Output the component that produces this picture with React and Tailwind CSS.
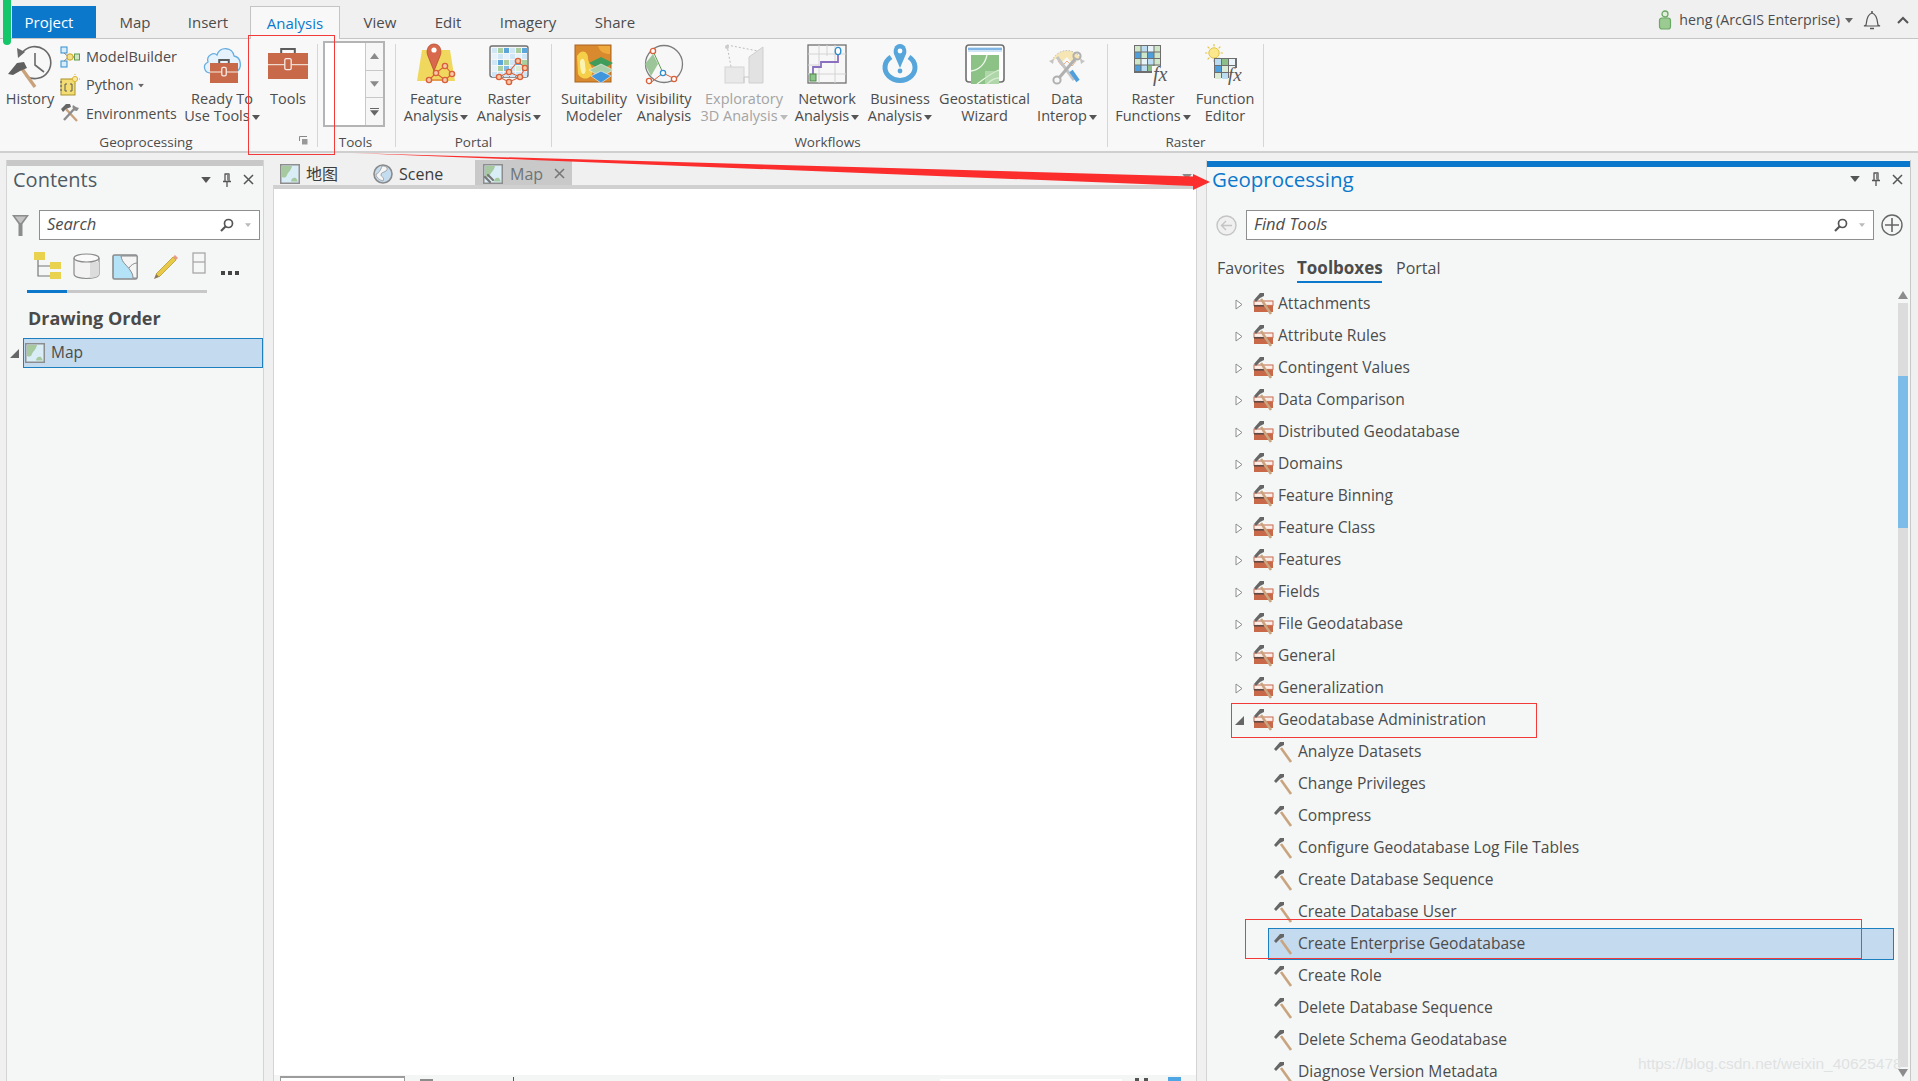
import React from "react";

function Caret({ c = "#555", className = "" }) {
  return (
    <svg width="8" height="5" viewBox="0 0 8 5" className={"inline-block align-middle " + className}>
      <polygon points="0,0 8,0 4,5" fill={c} />
    </svg>
  );
}

function Ico({ children, w = 40, h = 40 }) {
  return (
    <svg width={w} height={h} viewBox={`0 0 ${w} ${h}`} overflow="visible">
      {children}
    </svg>
  );
}

function Node({ x, y, r = 2.6, c = "#d9603a" }) {
  return <circle cx={x} cy={y} r={r} fill="#f6c9a8" stroke={c} strokeWidth="1.4" />;
}

function RasterCells({ x, y, s, cols, rows, palette }) {
  const out = [];
  for (let r = 0; r < rows; r++) {
    for (let q = 0; q < cols; q++) {
      out.push(
        <rect key={r + "-" + q} x={x + q * s} y={y + r * s} width={s - 1} height={s - 1} fill={palette[(r * 3 + q * 2 + r * q) % palette.length]} />
      );
    }
  }
  return out;
}

const HistoryIcon = () => (
  <svg width="46" height="44" viewBox="0 0 46 44">
    <path d="M15 9 A16 16 0 1 1 19 32" fill="none" stroke="#6a6a6a" strokeWidth="1.6" />
    <polygon points="10,4 18,8 11,14" fill="#6a6a6a" />
    <path d="M28 9 V21 L37 28" fill="none" stroke="#6a6a6a" strokeWidth="1.6" />
    <line x1="13" y1="22" x2="28" y2="43" stroke="#c9a27c" strokeWidth="3.4" />
    <polygon points="1,30 10,19 17,18 20,24 13,27 6,31" fill="#5f5f5f" />
  </svg>
);

const ModelBuilderIcon = () => (
  <Ico w={20} h={22}>
    <rect x="1" y="1" width="6" height="6" fill="#d8ecfa" stroke="#2f8fd0" />
    <rect x="1" y="15" width="6" height="6" fill="#d8ecfa" stroke="#2f8fd0" />
    <circle cx="10" cy="11" r="3.2" fill="#f4e08a" stroke="#c9a52a" />
    <rect x="14.5" y="8" width="5" height="6" fill="#cfe6c0" stroke="#5f9c50" />
    <path d="M4 7 L7.5 10 M4 15 L7.5 12 M13 11 H15" stroke="#888" />
  </Ico>
);

const PythonIcon = () => (
  <Ico w={20} h={22}>
    <rect x="1" y="5" width="14" height="16" fill="#f3dd72" stroke="#a8922e" />
    <path d="M1 7 v2 M1 11 v2 M1 15 v2" stroke="#555" />
    <path d="M7 10 H5 V17 H7 M10 10 H12 V17 H10" stroke="#5a5a5a" fill="none" />
    <circle cx="15" cy="5" r="2.6" fill="#fbe9a0" stroke="#d9b437" />
    <path d="M15 0 v1 M15 9 v1 M10 5 h1 M19 5 h1" stroke="#d9b437" />
  </Ico>
);

const EnvIcon = () => (
  <Ico w={20} h={20}>
    <line x1="6" y1="6" x2="17" y2="18" stroke="#c9a27c" strokeWidth="2.4" />
    <polygon points="1,6 6,1 10,1 11,4 6,6 3,9" fill="#666" />
    <line x1="15" y1="5" x2="4" y2="17" stroke="#8c8c8c" strokeWidth="2.4" />
    <path d="M13 2 a4 4 0 0 0 4 6 l2 -3 l-3 -1 z" fill="#8c8c8c" />
  </Ico>
);

const ToolboxBody = ({ x, y, w, h }) => (
  <g>
    <path d={`M${x + w * 0.33} ${y} v${-h * 0.15} h${w * 0.34} v${h * 0.15}`} fill="none" stroke="#5c5c5c" strokeWidth="2" />
    <rect x={x} y={y} width={w} height={h} fill="#c8694a" />
    <line x1={x} y1={y + h * 0.45} x2={x + w} y2={y + h * 0.45} stroke="#f0d8cc" strokeWidth="1.2" />
    <rect x={x + w * 0.42} y={y + h * 0.22} width={w * 0.16} height={h * 0.42} rx="1.4" fill="#c8694a" stroke="#f5ebe6" strokeWidth="1.3" />
  </g>
);

const CloudIcon = () => (
  <Ico>
    <path d="M9 29 C2 29 0 21 6 18 C4 11 12 8 15 11 C18 2 31 3 32 12 C39 13 41 24 34 28" fill="#e6f3fc" stroke="#67aee0" strokeWidth="1.3" />
    <ToolboxBody x={8} y={19} w={28} h={20} />
  </Ico>
);

const FeatureIcon = () => (
  <Ico>
    <polygon points="6,6 34,6 39,37 1,37" fill="#f0d85e" />
    <path d="M18 0 C11 0 10 8 12 12 L18 27 L24 12 C26 8 25 0 18 0 Z" fill="#d8694c" stroke="#b54e34" strokeWidth=".8" />
    <circle cx="18" cy="6" r="2.6" fill="#fff" />
    <path d="M13 36 L20 29 L29 36 L36 30 L29 22 L20 29 M13 36 L29 36" stroke="#d9603a" fill="none" strokeWidth="1.1" />
    <Node x={13} y={36} /><Node x={20} y={29} /><Node x={29} y={36} /><Node x={36} y={30} /><Node x={29} y={22} />
  </Ico>
);

const RasterIcon = () => (
  <Ico>
    <rect x="1" y="2" width="38" height="31" rx="2" fill="#f5f5f5" stroke="#6e6e6e" strokeWidth="1.4" />
    <RasterCells x={3} y={4} s={6} cols={6} rows={5} palette={["#cfe6f7", "#7fbce8", "#a9cfa0", "#e6f1fa", "#5da6dc", "#dcebd6"]} />
    <path d="M10 33 L20 28 L31 33 L36 24 L29 17 L20 28 M10 33 L20 38 L31 33" stroke="#d9603a" fill="none" strokeWidth="1.1" />
    <Node x={10} y={33} /><Node x={20} y={28} /><Node x={31} y={33} /><Node x={36} y={24} /><Node x={29} y={17} /><Node x={20} y={38} />
  </Ico>
);

const SuitIcon = () => (
  <Ico>
    <rect x="1" y="1" width="36" height="37" fill="#d98a2e" stroke="#a8631e" />
    <path d="M3 12 C8 4 14 8 14 14 C14 20 20 22 18 30 C14 38 6 34 4 30 Z" fill="#f6cf4a" />
    <path d="M6 17 C9 12 11 16 11 20 C11 25 13 27 10 30 C7 31 6 24 6 17 Z" fill="#fdf3b0" />
    <path d="M24 2 H36 V10 C30 10 26 8 24 2 Z" fill="#eeaa3c" />
    <polygon points="27,13 39,19 27,26 15,19" fill="#3f9c5a" />
    <polygon points="27,20 39,26 27,33 15,26" fill="#a9cfa8" stroke="#f7f7f7" strokeWidth=".6" />
    <polygon points="27,27 37,32 27,39 17,32" fill="#3f96dc" stroke="#f7f7f7" strokeWidth=".6" />
  </Ico>
);

const VisIcon = () => (
  <Ico>
    <circle cx="20" cy="20" r="18.5" fill="#f7f7f7" stroke="#7d7d7d" strokeWidth="1.3" />
    <polygon points="1,20 9,10 14,20 7,32" fill="#9cc59a" />
    <line x1="9" y1="7" x2="19" y2="29" stroke="#5f9c50" />
    <line x1="19" y1="29" x2="31" y2="35" stroke="#d9603a" />
    <line x1="19" y1="29" x2="5" y2="40" stroke="#d9603a" />
    <circle cx="9" cy="7" r="2.6" fill="#fff" stroke="#d9603a" strokeWidth="1.3" />
    <circle cx="19" cy="29" r="2.6" fill="#fff" stroke="#2f8fd0" strokeWidth="1.3" />
    <circle cx="30" cy="35" r="2.6" fill="#fff" stroke="#d9603a" strokeWidth="1.3" />
    <circle cx="5" cy="37" r="2.6" fill="#fff" stroke="#d9603a" strokeWidth="1.3" />
  </Ico>
);

const ExploreIcon = () => (
  <Ico>
    <polygon points="25,13 39,3 39,39 25,39" fill="#e2e2e2" stroke="#cfcfcf" />
    <rect x="1" y="23" width="19" height="16" fill="#e9e9e9" stroke="#d4d4d4" />
    <path d="M20 39 V33 H25" stroke="#c8c8c8" fill="none" />
    <path d="M3 1 L7 23 M3 1 L34 7" stroke="#bdbdbd" strokeDasharray="2 2" fill="none" />
    <circle cx="3" cy="3" r="2" fill="#ccc" />
  </Ico>
);

const NetworkIcon = () => (
  <Ico>
    <rect x="1" y="1" width="38" height="38" fill="#f7f7f7" stroke="#707070" strokeWidth="1.3" />
    <path d="M1 10 H39 M1 30 H39 M12 1 V39 M28 1 V39 M20 1 V12 M1 21 H12" stroke="#d4d4d4" strokeWidth="1" />
    <path d="M6 33 V23 H14 V18 H31 V8" fill="none" stroke="#8a6fc0" strokeWidth="1.8" />
    <rect x="3" y="30" width="6" height="7" fill="#8ec58c" stroke="#4f8a48" />
    <ellipse cx="31" cy="7" rx="2.8" ry="3.6" fill="#fff" stroke="#2f8fd0" strokeWidth="1.4" />
  </Ico>
);

const BusinessIcon = () => (
  <Ico>
    <path d="M11 13 A15 13 0 1 0 29 13" fill="none" stroke="#56a6dc" strokeWidth="5" />
    <path d="M20 0 C14 0 13 7 14 10 L20 24 L26 10 C27 7 26 0 20 0 Z" fill="#56a6dc" />
    <circle cx="20" cy="7" r="2.4" fill="#fff" />
    <circle cx="20" cy="27" r="2.4" fill="#56a6dc" />
  </Ico>
);

const GeoIcon = () => (
  <Ico>
    <rect x="1" y="1" width="38" height="37" rx="3" fill="#fff" stroke="#707070" strokeWidth="1.6" />
    <rect x="3" y="3" width="34" height="5" fill="#cfe4f5" />
    <rect x="3" y="4" width="34" height="2" fill="#7fb6e6" />
    <rect x="6" y="11" width="28" height="29" fill="#8dc287" />
    <path d="M6 27 C14 26 20 20 22 11 M12 40 C20 34 28 28 34 26 M22 40 C26 36 30 34 34 34" stroke="#eef7ea" strokeWidth="1.3" fill="none" />
    <rect x="20" y="27" width="14" height="13" fill="#c5e2bf" opacity=".6" />
  </Ico>
);

const InteropIcon = () => (
  <Ico>
    <path d="M5 17 A16 16 0 0 1 35 17 L28 14 L24 18 L20 13 L15 18 L11 14 Z" fill="#f6e6b4" />
    <path d="M5 17 A16 16 0 0 1 35 17" fill="none" stroke="#bcbcbc" strokeDasharray="1.5 1.5" />
    <path d="M11 17 L15 22 L20 17 L25 22 L29 17" stroke="#eab08a" fill="none" />
    <line x1="10" y1="13" x2="27" y2="36" stroke="#c4c4c4" strokeWidth="3" />
    <line x1="24" y1="27" x2="31" y2="37" stroke="#4f9fdc" strokeWidth="4" />
    <line x1="29" y1="14" x2="12" y2="34" stroke="#b0b0b0" strokeWidth="3" />
    <circle cx="10" cy="36" r="3.6" fill="none" stroke="#b0b0b0" strokeWidth="2" />
    <circle cx="30" cy="12" r="3.6" fill="none" stroke="#b0b0b0" strokeWidth="2" />
    <path d="M2 17 l5 -2 l-1 5 z M38 17 l-5 -2 l1 5 z" fill="#c4c4c4" />
  </Ico>
);

const FxText = ({ x, y, s }) => (
  <text x={x} y={y} fontSize={s} fontStyle="italic" fontFamily="'Liberation Serif', serif" fill="#5a5a5a">fx</text>
);

const RasterFnIcon = () => (
  <Ico>
    <rect x="1" y="1" width="27" height="28" fill="#6e6e6e" />
    <RasterCells x={2} y={2} s={6.5} cols={4} rows={4} palette={["#cfe6c8", "#8cbf88", "#bcdcf2", "#4f9fdc", "#e8f3fa", "#6aa869"]} />
    <rect x="19" y="22" width="20" height="18" fill="#f8f8f8" />
    <FxText x={20} y={37} s={20} />
  </Ico>
);

const FnEditorIcon = () => (
  <Ico>
    <circle cx="9" cy="9" r="5.2" fill="#fbe88c" stroke="#e2c648" />
    <path d="M9 0 v2.4 M9 15.6 v2.4 M0 9 h2.4 M15.6 9 h2.4 M2.6 2.6 l1.8 1.8 M13.6 13.6 l1.8 1.8 M2.6 15.4 l1.8 -1.8 M13.6 4.4 l1.8 -1.8" stroke="#e2c648" strokeWidth="1.2" />
    <rect x="9" y="14" width="23" height="20" fill="#6e6e6e" />
    <RasterCells x={10} y={15} s={7} cols={3} rows={3} palette={["#bcdcf2", "#dcebd6", "#8cbf88", "#4f9fdc", "#e8f3fa"]} />
    <rect x="24" y="24" width="16" height="16" fill="#f8f8f8" />
    <FxText x={23} y={37} s={19} />
  </Ico>
);

const MapThumb = ({ link }) => (
  <svg width="20" height="20" viewBox="0 0 20 20">
    <rect x=".75" y=".75" width="18.5" height="18.5" fill="#d9edf7" stroke="#8d8d8d" strokeWidth="1.5" />
    <path d="M2 2 H12 C11 7 8 8 7 11 C6 14 4 14 2 13 Z" fill="#a6c9a0" />
    <path d="M11 17.5 C11 14 14 13 16 14 L18 17.5 Z" fill="#a6c9a0" />
    {link && <path d="M2 13 l5 5 m-2 -7 l5 5" stroke="#777" strokeWidth="2.2" strokeLinecap="round" />}
  </svg>
);

const GlobeIcon = () => (
  <svg width="20" height="20" viewBox="0 0 20 20">
    <circle cx="10" cy="10" r="9" fill="#c4dcf0" stroke="#8a8a8a" strokeWidth="1.6" />
    <path d="M9 2 C13 2 16 4 13 7 C10 9 8 8 8 11 C8 13 12 13 10 17 C7 16 3 14 3 10 C5 10 8 6 9 2 Z" fill="#f5f5f5" stroke="#8a8a8a" strokeWidth=".7" />
  </svg>
);

const Magnifier = () => (
  <svg width="14" height="14" viewBox="0 0 14 14">
    <circle cx="8.5" cy="5.5" r="4" fill="#fff" stroke="#555" strokeWidth="1.7" />
    <line x1="5.5" y1="8.5" x2="1" y2="13" stroke="#555" strokeWidth="2.2" />
  </svg>
);

const Pane = () => (
  <div className="flex items-center gap-[11px]">
    <Caret c="#555" className="w-[10px] h-[6px]" />
    <svg width="10" height="14" viewBox="0 0 10 14">
      <path d="M2.5 1 H7.5 M3 1 V8 M7 1 V8 M1 8.5 H9 M5 9 V14" stroke="#555" strokeWidth="1.3" fill="none" />
      <rect x="5" y="1.5" width="2" height="6" fill="#888" />
    </svg>
    <svg width="11" height="11" viewBox="0 0 11 11">
      <path d="M1 1 L10 10 M10 1 L1 10" stroke="#555" strokeWidth="1.5" />
    </svg>
  </div>
);

const Hammer = () => (
  <svg width="20" height="22" viewBox="0 0 20 22">
    <line x1="8" y1="7" x2="18" y2="21" stroke="#c9a47f" strokeWidth="2.6" />
    <polygon points="1,8 7,1 11,1 11,4 7,6 3,10" fill="#666" />
  </svg>
);

const ToolboxTree = () => (
  <svg width="21" height="24" viewBox="0 0 21 24">
    <rect x="1" y="9" width="19" height="4.4" fill="#fbeee9" stroke="#c8694a" />
    <rect x="1" y="14" width="19" height="6" fill="#c8694a" />
    <rect x="1" y="13" width="10" height="1.6" fill="#5c4a44" />
    <line x1="8" y1="7" x2="18" y2="22" stroke="#c9a47f" strokeWidth="2.6" />
    <polygon points="1,8 7,1 11,1 11,4 7,6 3,10" fill="#666" />
  </svg>
);

function BigBtn({ w, icon, l1, l2, caret, disabled }) {
  return (
    <div style={{ width: w }} className={"flex flex-col items-center shrink-0 " + (disabled ? "text-[#a4a4a4]" : "text-[#4c4c4c]")}>
      <div className="h-[44px] flex items-start justify-center">{icon}</div>
      <div className="mt-[2px] h-[17px] leading-[17px] whitespace-nowrap">{l1}</div>
      <div className="h-[17px] leading-[17px] whitespace-nowrap">
        {l2}
        {caret && <Caret c={disabled ? "#bbb" : "#555"} className="ml-[2px]" />}
      </div>
    </div>
  );
}

function Group({ width, label, labelClass = "justify-center", children, noBorder }) {
  return (
    <div style={{ width }} className={"relative shrink-0 h-[103px] mt-[5px] flex flex-col " + (noBorder ? "" : "border-r border-[#d6d6d6]")}>
      <div className="flex h-[88px] shrink-0 items-start">{children}</div>
      <div className={"flex h-[17px] shrink-0 mt-[2px] leading-[17px] text-[13.5px] text-[#4c4c4c] " + labelClass}>{label}</div>
    </div>
  );
}

const groups = [
  "Attachments", "Attribute Rules", "Contingent Values", "Data Comparison", "Distributed Geodatabase",
  "Domains", "Feature Binning", "Feature Class", "Features", "Fields", "File Geodatabase", "General", "Generalization",
];
const tools = [
  "Analyze Datasets", "Change Privileges", "Compress", "Configure Geodatabase Log File Tables",
  "Create Database Sequence", "Create Database User", "Create Enterprise Geodatabase", "Create Role",
  "Delete Database Sequence", "Delete Schema Geodatabase", "Diagnose Version Metadata",
];

function GroupRow({ name, open }) {
  return (
    <div className="h-[32px] flex items-center shrink-0">
      <div className="w-[24px] ml-[28px] flex items-center">
        {open ? (
          <svg width="9" height="9" viewBox="0 0 9 9"><polygon points="9,0 9,9 0,9" fill="#666" /></svg>
        ) : (
          <svg width="8" height="11" viewBox="0 0 8 11"><polygon points="1,1 7,5.5 1,10" fill="#fff" stroke="#8c8c8c" /></svg>
        )}
      </div>
      <div className="w-[25px] ml-[-6px] flex"><ToolboxTree /></div>
      <span>{name}</span>
    </div>
  );
}

function ToolRow({ name, selected }) {
  return (
    <div className={"h-[32px] ml-[61px] flex items-center shrink-0 " + (selected ? "pl-[4px] bg-[#c4daee] border border-[#1c7fc0]" : "pl-[5px]")}>
      <div className="w-[25px] flex"><Hammer /></div>
      <span>{name}</span>
    </div>
  );
}

export default function App() {
  const tab = "mt-[6px] h-[32px] pt-[1px] flex items-center justify-center shrink-0";
  return (
    <div
      className="relative w-[1918px] h-[1081px] overflow-hidden flex flex-col bg-[#f0f0f0] text-[15px] text-[#4c4c4c]"
      style={{ fontFamily: "'Open Sans','Noto Sans CJK SC',sans-serif" }}
    >
      {/* Tabs */}
      <div className="h-[39px] shrink-0 border-b border-[#c4c4c4] flex items-start pl-[12px] relative">
        <div className={tab + " w-[84px] pr-[10px] bg-[#0b78cc] text-white"}>Project</div>
        <div className={tab + " w-[78px]"}>Map</div>
        <div className={tab + " w-[68px] mr-[8px]"}>Insert</div>
        <div className={tab + " h-[33px] w-[90px] bg-[#f8f8f8] border border-b-0 border-[#c4c4c4] text-[#0b78cc]"}>Analysis</div>
        <div className={tab + " w-[80px]"}>View</div>
        <div className={tab + " w-[56px]"}>Edit</div>
        <div className={tab + " w-[104px]"}>Imagery</div>
        <div className={tab + " w-[70px]"}>Share</div>
        <div className="ml-auto flex items-center h-[38px] pt-[2px] pr-[9px]">
          <svg width="14" height="20" viewBox="0 0 14 20" className="mr-[7px]">
            <circle cx="7" cy="4" r="3" fill="#e2efdc" stroke="#6aa863" strokeWidth="1.3" />
            <rect x="1.5" y="8" width="11" height="11" rx="2.5" fill="#9bcb93" stroke="#6aa863" strokeWidth="1.2" />
          </svg>
          <span className="text-[14.2px] whitespace-nowrap">heng (ArcGIS Enterprise)</span>
          <Caret c="#666" className="ml-[5px]" />
          <svg width="18" height="19" viewBox="0 0 18 19" className="ml-[10px]">
            <path d="M3 14 C4 11 3 4 9 2 C15 4 14 11 15 14 L17 15 H1 Z" fill="none" stroke="#555" strokeWidth="1.2" />
            <path d="M8 1 h2 M7 17.5 h4" stroke="#555" strokeWidth="1.4" />
          </svg>
          <svg width="12" height="8" viewBox="0 0 12 8" className="ml-[16px]">
            <path d="M1 7 L6 2 L11 7" fill="none" stroke="#555" strokeWidth="2" />
          </svg>
        </div>
      </div>

      {/* Ribbon */}
      <div className="h-[114px] shrink-0 bg-[#f8f8f8] border-b-2 border-[#cfcfcf] flex items-start text-[14.5px]">
        <Group width={318} label={<span className="ml-[-25px]">Geoprocessing</span>}>
          <BigBtn w={60} l1="History" l2="" icon={<HistoryIcon />} />
          <div className="w-[125px] shrink-0 flex flex-col pt-[1px]">
            <div className="h-[24px] flex items-center gap-[6px]"><ModelBuilderIcon />ModelBuilder</div>
            <div className="h-[24px] flex items-center gap-[6px] mt-[4px]"><PythonIcon />Python<Caret c="#666" className="ml-[-3px] scale-75" /></div>
            <div className="h-[24px] flex items-center gap-[6px] mt-[4px]"><EnvIcon /><span className="text-[14px]">Environments</span></div>
          </div>
          <BigBtn w={74} l1="Ready To" l2="Use Tools" caret icon={<CloudIcon />} />
          <BigBtn w={58} l1="Tools" l2="" icon={
            <Ico w={40} h={36}><ToolboxBody x={0} y={9} w={40} h={26} /></Ico>
          } />
          <svg width="9" height="9" viewBox="0 0 9 9" className="absolute left-[299px] top-[92px]">
            <path d="M.5 5 V.5 H8" fill="none" stroke="#888" />
            <rect x="3" y="3" width="5.5" height="5.5" fill="#999" />
          </svg>
        </Group>
        <Group width={78} label={<span className="mr-[2px]">Tools</span>}>
          <div className="ml-[5px] mt-[-3px] w-[62px] h-[86px] border-2 border-[#b4b4b4] bg-white flex justify-end">
            <div className="w-[18px] border-l border-[#c8c8c8] flex flex-col bg-[#f6f6f6]">
              <div className="flex-1 flex items-center justify-center border-b border-[#c8c8c8]">
                <svg width="9" height="6" viewBox="0 0 9 6"><polygon points="4.5,0 9,6 0,6" fill="#8a8a8a" /></svg>
              </div>
              <div className="flex-1 flex items-center justify-center border-b border-[#c8c8c8]">
                <Caret c="#8a8a8a" className="w-[9px] h-[6px]" />
              </div>
              <div className="flex-1 flex flex-col gap-[1px] items-center justify-center">
                <div className="w-[9px] h-[1px] bg-[#666]" />
                <Caret c="#666" className="w-[9px] h-[6px]" />
              </div>
            </div>
          </div>
        </Group>
        <Group width={156} label="Portal">
          <BigBtn w={80} l1="Feature" l2="Analysis" caret icon={<FeatureIcon />} />
          <BigBtn w={66} l1="Raster" l2="Analysis" caret icon={<RasterIcon />} />
        </Group>
        <Group width={556} label={<span className="mr-[4px]">Workflows</span>}>
          <BigBtn w={84} l1="Suitability" l2="Modeler" icon={<SuitIcon />} />
          <BigBtn w={56} l1="Visibility" l2="Analysis" icon={<VisIcon />} />
          <BigBtn w={104} l1="Exploratory" l2="3D Analysis" caret disabled icon={<ExploreIcon />} />
          <BigBtn w={62} l1="Network" l2="Analysis" caret icon={<NetworkIcon />} />
          <BigBtn w={84} l1="Business" l2="Analysis" caret icon={<BusinessIcon />} />
          <BigBtn w={85} l1="Geostatistical" l2="Wizard" icon={<GeoIcon />} />
          <BigBtn w={80} l1="Data" l2="Interop" caret icon={<InteropIcon />} />
        </Group>
        <Group width={156} label="Raster">
          <BigBtn w={90} l1="Raster" l2="Functions" caret icon={<RasterFnIcon />} />
          <BigBtn w={54} l1="Function" l2="Editor" icon={<FnEditorIcon />} />
        </Group>
      </div>

      {/* Main */}
      <div className="flex-1 min-h-0 flex pt-[7px] pl-[6px] pr-[7px] gap-[9px]">
        {/* Contents */}
        <div className="w-[258px] shrink-0 border-x border-[#d4d4d4] bg-[#f5f7f7] flex flex-col">
          <div className="h-[6px] bg-[#c8c8c8] shrink-0" />
          <div className="h-[27px] pl-[6px] pr-[9px] flex items-center justify-between shrink-0">
            <span className="text-[20px] text-[#4e5a64]">Contents</span>
            <Pane />
          </div>
          <div className="flex items-center mt-[17px] pl-[5px] pr-[3px] shrink-0">
            <svg width="17" height="21" viewBox="0 0 17 21">
              <polygon points="0,0 17,0 10.5,9 10.5,21 6.5,21 6.5,9" fill="#8c8c8c" />
              <polygon points="3,1.5 14,1.5 9,8 8,8" fill="#c4c4c4" />
            </svg>
            <div className="ml-[10px] flex-1 h-[30px] bg-white border border-[#8f8f8f] flex items-center pl-[7px] pr-[8px]">
              <span className="italic text-[16.5px] flex-1 pb-[2px]">Search</span>
              <Magnifier />
              <Caret c="#bbb" className="ml-[11px] w-[6px] h-[4px]" />
            </div>
          </div>
          <div className="mt-[10px] h-[30px] pl-[26px] flex items-end gap-[12px] shrink-0">
            <svg width="28" height="28" viewBox="0 0 28 28">
              <rect x="1" y="0" width="11" height="8" fill="#e8d24e" />
              <rect x="17" y="10" width="11" height="7" fill="#e8d24e" />
              <rect x="17" y="20" width="11" height="7" fill="#e8d24e" />
              <path d="M5 8 V24 H17 M5 14 H17" stroke="#777" fill="none" strokeWidth="1.2" />
            </svg>
            <svg width="27" height="27" viewBox="0 0 27 27">
              <path d="M1 5 V21 C1 27 26 27 26 21 V5" fill="#f2f2f2" stroke="#8a8a8a" strokeWidth="1.2" />
              <path d="M17 9 H26 V21 C26 24 20 25 17 25 Z" fill="#dcdcdc" />
              <ellipse cx="13.5" cy="5" rx="12.5" ry="4" fill="#fafafa" stroke="#8a8a8a" strokeWidth="1.2" />
            </svg>
            <svg width="26" height="26" viewBox="0 0 26 26">
              <rect x="1" y="1" width="24" height="24" rx="1.5" fill="#b4e2f6" stroke="#8a8a8a" strokeWidth="1.6" />
              <path d="M9 2 C10 9 15 11 18 16 C20 19 21 21 21 24 H25 V2 Z" fill="#f5f5f5" stroke="#8a8a8a" strokeWidth="1" />
              <path d="M17 14 C19 11 22 9 25 9" stroke="#8a8a8a" fill="none" />
            </svg>
            <svg width="26" height="26" viewBox="0 0 26 26" className="ml-[3px]">
              <path d="M3 20 L20 3 L23 6 L6 23 Z" fill="#e8c94a" stroke="#b59a2c" strokeWidth=".8" />
              <path d="M20 3 L22 1 L25 4 L23 6 Z" fill="#e89a88" />
              <path d="M3 20 L1 25 L6 23 Z" fill="#8c7a5a" />
            </svg>
            <svg width="14" height="22" viewBox="0 0 14 22" className="mb-[6px] ml-[1px]">
              <rect x="1" y="1" width="12" height="20" fill="none" stroke="#a8a8a8" strokeWidth="1.3" />
              <line x1="1" y1="10" x2="13" y2="10" stroke="#a8a8a8" strokeWidth="1.3" />
            </svg>
            <div className="flex gap-[3px] mb-[5px] ml-[3px]">
              <div className="w-[4px] h-[4px] bg-[#444]" />
              <div className="w-[4px] h-[4px] bg-[#444]" />
              <div className="w-[4px] h-[4px] bg-[#444]" />
            </div>
          </div>
          <div className="mt-[10px] ml-[20px] w-[180px] h-[3px] bg-[#c8c8c8] flex shrink-0">
            <div className="w-[40px] h-[3px] bg-[#0b78cc]" />
          </div>
          <div className="mt-[13px] ml-[21px] h-[24px] leading-[24px] text-[18px] font-bold text-[#4a4a4a] shrink-0">Drawing Order</div>
          <div className="mt-[8px] h-[30px] flex items-center shrink-0">
            <svg width="9" height="9" viewBox="0 0 9 9" className="ml-[3px] mr-[4px]"><polygon points="9,0 9,9 0,9" fill="#666" /></svg>
            <div className="flex-1 h-[30px] bg-[#c4daee] border border-[#1c7fc0] flex items-center pl-[1px] gap-[6px] text-[15.5px]">
              <MapThumb />
              Map
            </div>
          </div>
        </div>

        {/* Center */}
        <div className="w-[924px] shrink-0 flex flex-col">
          <div className="h-[25px] shrink-0 flex items-stretch relative text-[16px]">
            <div className="flex items-center pl-[7px] pt-[2px] gap-[6px] w-[202px] text-[#3c3c3c]">
              <MapThumb />
              <span>地图</span>
              <span className="ml-[29px]"><GlobeIcon /></span>
              <span>Scene</span>
            </div>
            <div className="w-[97px] bg-[#c9c9c9] flex items-center pl-[8px] pt-[2px] gap-[7px] text-[#6e7478]">
              <MapThumb link />
              <span>Map</span>
              <svg width="11" height="11" viewBox="0 0 11 11" className="ml-[4px]"><path d="M1 1 L10 10 M10 1 L1 10" stroke="#777" strokeWidth="1.6" /></svg>
            </div>
            <Caret c="#8a8a8a" className="absolute right-[5px] top-[14px] w-[10px] h-[6px]" />
          </div>
          <div className="flex-1 min-h-0 bg-white border-t-4 border-[#d0d0d0] border-x border-x-[#d4d4d4]" />
          <div className="h-[6px] shrink-0 bg-[#f3f6f5] border-x border-[#d4d4d4] flex items-end pl-[6px]">
            <div className="w-[125px] h-[5px] bg-white border-t-2 border-x border-[#9c9c9c]" />
            <div className="ml-[15px] w-[13px] h-[2px] bg-[#8c8c8c]" />
            <div className="ml-[80px] w-[1px] h-[4px] bg-[#555]" />
            <div className="ml-[426px] w-[182px] h-[2px] bg-white" />
            <div className="ml-[13px] w-[4px] h-[3px] bg-[#555]" />
            <div className="ml-[5px] w-[4px] h-[3px] bg-[#555]" />
            <div className="ml-[20px] w-[13px] h-[4px] bg-[#4ea6e4]" />
          </div>
        </div>

        {/* Geoprocessing */}
        <div className="w-[705px] shrink-0 border-x border-[#d4d4d4] border-r-[#c8c8c8] bg-[#f5f7f7] flex flex-col text-[15.6px]">
          <div className="h-[6px] bg-[#0b78cc] shrink-0 mt-[1px]" />
          <div className="h-[24px] pl-[5px] pr-[7px] flex items-center justify-between shrink-0">
            <span className="text-[20.5px] text-[#0b78cc]">Geoprocessing</span>
            <Pane />
          </div>
          <div className="flex items-center mt-[19px] pl-[9px] pr-[7px] shrink-0">
            <svg width="21" height="21" viewBox="0 0 21 21">
              <circle cx="10.5" cy="10.5" r="9.5" fill="#f0f0f0" stroke="#c4c4c4" strokeWidth="1.4" />
              <path d="M16 10.5 H5.5 M10 6 L5.5 10.5 L10 15" stroke="#c4c4c4" strokeWidth="1.4" fill="none" />
            </svg>
            <div className="ml-[9px] flex-1 h-[30px] bg-white border border-[#8f8f8f] flex items-center pl-[7px] pr-[8px]">
              <span className="italic text-[16.5px] flex-1 pb-[2px]">Find Tools</span>
              <Magnifier />
              <Caret c="#bbb" className="ml-[11px] w-[6px] h-[4px]" />
            </div>
            <svg width="22" height="22" viewBox="0 0 22 22" className="ml-[7px]">
              <circle cx="11" cy="11" r="10" fill="none" stroke="#666" strokeWidth="1.4" />
              <path d="M11 4 V18 M4 11 H18" stroke="#666" strokeWidth="1.6" />
            </svg>
          </div>
          <div className="mt-[12px] h-[31px] pl-[10px] flex items-start shrink-0 text-[16px] leading-[32px]">
            <span className="w-[80px]">Favorites</span>
            <span className="w-[85px] font-bold border-b-2 border-[#0b78cc] h-[31px] text-[17px] whitespace-nowrap">Toolboxes</span>
            <span className="ml-[14px]">Portal</span>
          </div>
          <div className="flex-1 min-h-0 mt-[5px] flex overflow-hidden">
            <div className="w-[687px] shrink-0 flex flex-col">
              {groups.map((g) => <GroupRow key={g} name={g} />)}
              <GroupRow name="Geodatabase Administration" open />
              {tools.map((t) => <ToolRow key={t} name={t} selected={t === "Create Enterprise Geodatabase"} />)}
            </div>
            <div className="ml-[4px] w-[10px] shrink-0 flex flex-col items-center">
              <svg width="10" height="8" viewBox="0 0 10 8" className="mt-[3px]"><polygon points="5,0 10,8 0,8" fill="#8c8c8c" /></svg>
              <div className="mt-[4px] w-[10px] flex-1 min-h-0 bg-[#dcdcdc] flex flex-col">
                <div className="h-[73px]" />
                <div className="h-[152px] bg-[#7dbbe8]" />
              </div>
              <svg width="10" height="8" viewBox="0 0 10 8" className="mb-[4px] mt-[2px]"><polygon points="0,0 10,0 5,8" fill="#8c8c8c" /></svg>
            </div>
          </div>
        </div>
      </div>

      {/* Overlays: annotations over the screenshot */}
      <div className="absolute left-[3px] top-0 w-[8px] h-[45px] rounded-b-[4px] bg-[#16c76a]" />
      <div className="absolute left-[248px] top-[35px] w-[87px] h-[120px] border border-[#f23a3a]" />
      <div className="absolute left-[1231px] top-[703px] w-[306px] h-[35px] border border-[#f23a3a]" />
      <div className="absolute left-[1245px] top-[919px] w-[617px] h-[40px] border border-[#f23a3a]" />
      <svg className="absolute left-0 top-0 pointer-events-none" width="1918" height="1081">
        <polygon points="352,153 1193,176.5 1193,174 1210,182 1193,190 1193,186 " fill="#fb2d2d" />
      </svg>
      <div className="absolute left-[1638px] top-[1052px] text-[15.5px] text-[#dfe2e2] whitespace-nowrap" style={{ fontFamily: "'Liberation Sans',sans-serif" }}>
        https://blog.csdn.net/weixin_40625478
      </div>
    </div>
  );
}
